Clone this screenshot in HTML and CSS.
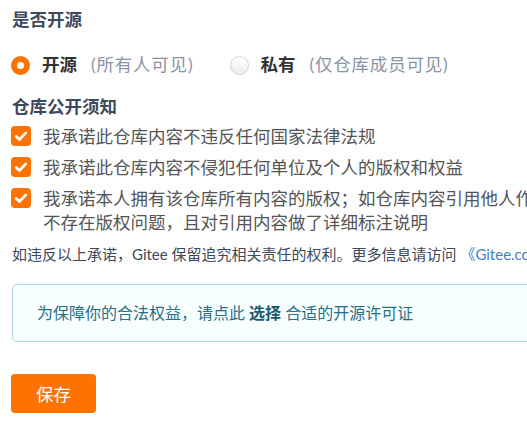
FILE: index.html
```html
<!DOCTYPE html>
<html lang="zh-CN">
  <head>
    <meta charset="UTF-8" />
    <meta name="viewport" content="width=device-width, initial-scale=1.0" />
    <title>仓库设置</title>
    <link rel="stylesheet" href="styles.css">
  </head>
  <body>
    <form class="page">
      <h3 class="field-title">是否开源</h3>

      <div class="radio-group">
        <label class="radio-item">
          <span class="radio checked"></span>
          <span class="radio-label">开源</span>
          <span class="radio-desc">(所有人可见)</span>
        </label>
        <label class="radio-item">
          <span class="radio"></span>
          <span class="radio-label">私有</span>
          <span class="radio-desc">(仅仓库成员可见)</span>
        </label>
      </div>

      <h3 class="field-title notice-title">仓库公开须知</h3>

      <div class="checks">
        <label class="check-item">
          <span class="checkbox">
            <svg viewBox="0 0 20 20" width="20" height="20"><path d="M5.2 10.4l3.2 3.1 6.4-6.6" fill="none" stroke="#fff" stroke-width="2.8" stroke-linecap="round" stroke-linejoin="round"/></svg>
          </span>
          <span class="check-text">我承诺此仓库内容不违反任何国家法律法规</span>
        </label>
        <label class="check-item">
          <span class="checkbox">
            <svg viewBox="0 0 20 20" width="20" height="20"><path d="M5.2 10.4l3.2 3.1 6.4-6.6" fill="none" stroke="#fff" stroke-width="2.8" stroke-linecap="round" stroke-linejoin="round"/></svg>
          </span>
          <span class="check-text">我承诺此仓库内容不侵犯任何单位及个人的版权和权益</span>
        </label>
        <label class="check-item">
          <span class="checkbox">
            <svg viewBox="0 0 20 20" width="20" height="20"><path d="M5.2 10.4l3.2 3.1 6.4-6.6" fill="none" stroke="#fff" stroke-width="2.8" stroke-linecap="round" stroke-linejoin="round"/></svg>
          </span>
          <span class="check-text">我承诺本人拥有该仓库所有内容的版权；如仓库内容引用他人作品，须确保获得授权许可，不存在版权问题，且对引用内容做了详细标注说明</span>
        </label>
      </div>

      <p class="note">如违反以上承诺，Gitee 保留追究相关责任的权利。更多信息请访问 <a href="#">《Gitee.com 用户协议》</a></p>

      <div class="message">
        为保障你的合法权益，请点此 <a href="#">选择</a> 合适的开源许可证
      </div>

      <button type="submit" class="btn-save">保存</button>
    </form>
  </body>
</html>
```

FILE: styles.css
```css
* {
  box-sizing: border-box;
}

body {
  margin: 0;
  padding: 0;
  background: #fff;
  font-family: Lato, "Noto Sans CJK SC", sans-serif;
  color: #40485b;
  overflow: hidden;
}

.page {
  width: 753px;
  padding: 8px 0 0 11px;
}

.field-title {
  margin: 0 0 0 1px;
  font-size: 17.5px;
  line-height: 24px;
  font-weight: bold;
  color: #40485b;
}

.radio-group {
  display: flex;
  align-items: center;
  margin-top: 21px;
  height: 24px;
}

.radio-item {
  display: flex;
  align-items: center;
  margin-right: 37px;
  font-size: 17.5px;
  line-height: 24px;
  cursor: pointer;
}

.radio {
  width: 19px;
  height: 19px;
  border-radius: 50%;
  border: 1px solid #d4d4d5;
  background: linear-gradient(#fff, #ececee);
  margin-right: 11px;
}

.radio.checked {
  border: 6px solid #fe7300;
  background: #fff;
  margin-right: 12px;
}

.radio-label {
  font-weight: bold;
  color: #333;
}

.radio-desc {
  margin-left: 14px;
  letter-spacing: 0.8px;
  color: #8c92a4;
}

.notice-title {
  margin-top: 18px;
}

.checks {
  display: flex;
  flex-direction: column;
  gap: 7px;
  margin-top: 6px;
}

.check-item {
  display: flex;
  align-items: flex-start;
  font-size: 17.5px;
  line-height: 24px;
  color: #555;
}

.checkbox {
  flex: none;
  width: 20px;
  height: 20px;
  margin-top: 1px;
  margin-right: 12px;
  border-radius: 4px;
  background: #fe7300;
}

.checkbox svg {
  display: block;
}

.check-text {
  flex: 1;
}

.note {
  margin: 9px 0 0 1px;
  font-size: 15px;
  line-height: 20px;
  color: #40485b;
  white-space: nowrap;
}

.note a {
  color: #4183c4;
  text-decoration: none;
}

.message {
  margin: 20px 0 0 1px;
  padding: 17px 24px;
  font-size: 16px;
  line-height: 22px;
  color: #276f86;
  background: #f8ffff;
  border: 1px solid #a9d5de;
  border-radius: 5px;
  white-space: nowrap;
}

.message a {
  font-weight: bold;
  color: #1a5a6e;
  text-decoration: none;
}

.btn-save {
  display: block;
  margin-top: 32px;
  width: 85px;
  height: 39px;
  border: none;
  border-radius: 4px;
  background: #fe7300;
  color: #fff;
  font-family: Lato, "Noto Sans CJK SC", sans-serif;
  font-size: 17.5px;
  cursor: pointer;
}
```
